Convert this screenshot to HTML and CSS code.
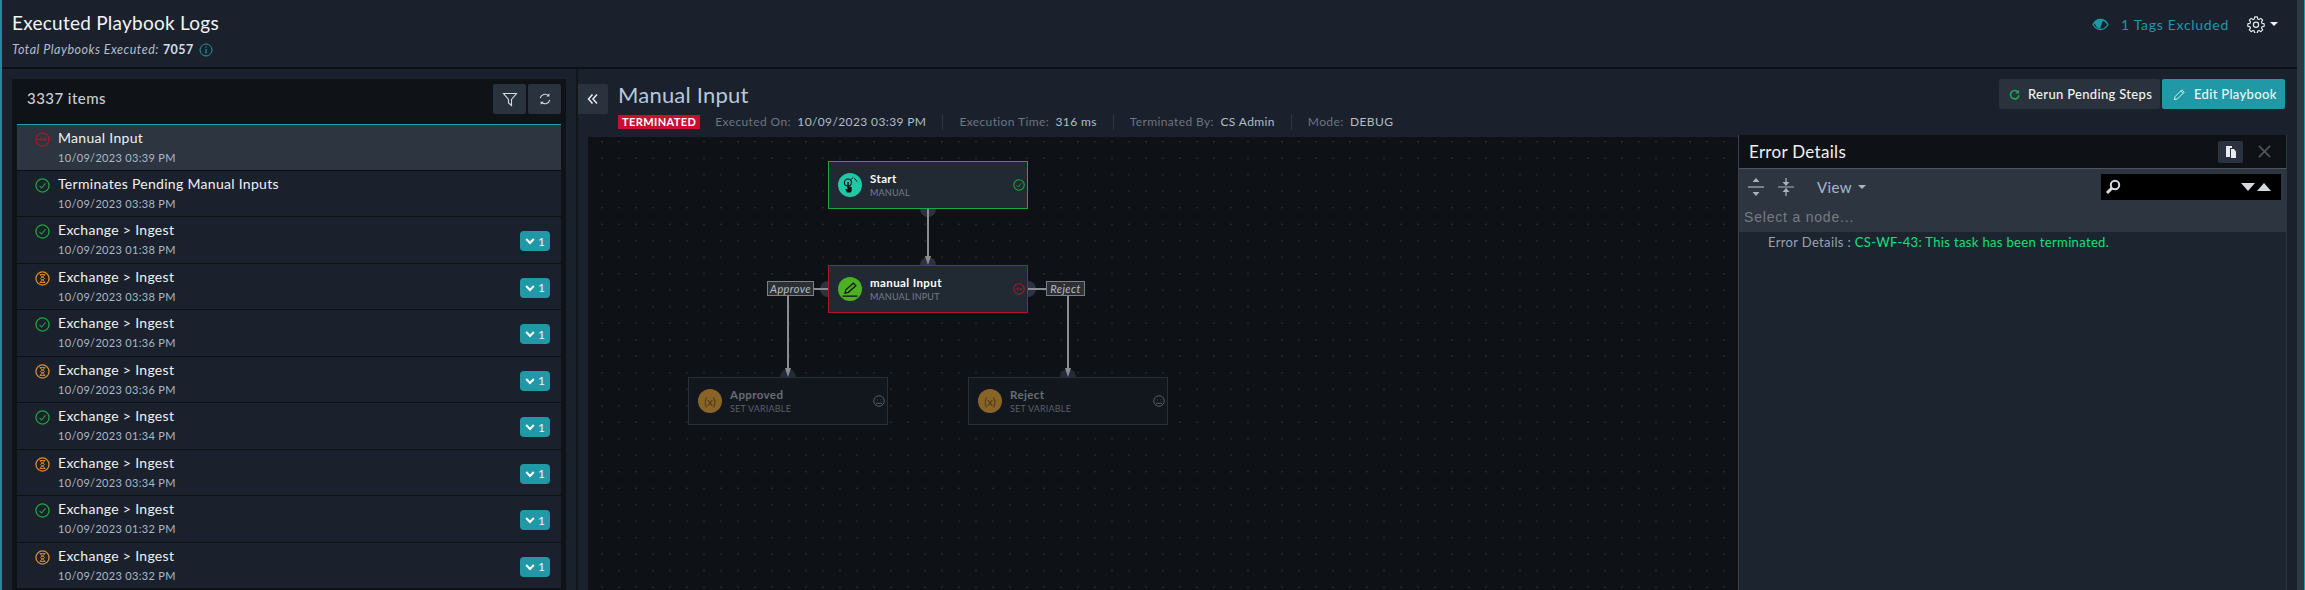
FILE: index.html
```html
<!DOCTYPE html>
<html lang="en">
  <head>
    <meta charset="UTF-8" />
    <title>Executed Playbook Logs</title>
    <link rel="stylesheet" href="styles.css">
  </head>
  <body>
    <svg class="defs" width="0" height="0">
      <symbol id="st-ok" viewBox="0 0 16 16">
        <circle cx="8" cy="8" r="7" fill="none" stroke="#1fa53c" stroke-width="1.4" />
        <path d="M4.8 8.400l2.200 2.300 4.200-5" fill="none" stroke="#1fa53c" stroke-width="1.100" />
      </symbol>
      <symbol id="st-term" viewBox="0 0 16 16">
        <circle cx="8" cy="8" r="7" fill="none" stroke="#b5122b" stroke-width="1.4" />
        <path d="M2.500 8h5M6 6.500L7.600 8 6 9.500M9 6.300l3 3.400M12 6.300l-3 3.400" fill="none" stroke="#b5122b" stroke-width="1.100" />
      </symbol>
      <symbol id="st-wait" viewBox="0 0 16 16">
        <circle cx="8" cy="8" r="7" fill="none" stroke="#de8b2c" stroke-width="1.4" />
        <path d="M5 3.800h6M5 12.200h6M5.800 3.800c0 2.600 4.400 3 4.400 4.200s-4.400 1.600-4.400 4.200M10.200 3.800c0 2.600-4.400 3-4.400 4.200s4.400 1.600 4.400 4.200" fill="none" stroke="#de8b2c" stroke-width="1" />
      </symbol>
      <symbol id="chev" viewBox="0 0 10 8">
        <path d="M1.200 2l3.800 4 3.800-4" fill="none" stroke="#fff" stroke-width="2" />
      </symbol>
    </svg>

    <div class="page">
      <header class="top-bar">
        <div>
          <h1 class="page-title">Executed Playbook Logs</h1>
          <div class="page-sub">
            <em>Total Playbooks Executed:</em> <strong>7057</strong>
            <svg class="info-icon" viewBox="0 0 14 14">
              <circle cx="7" cy="7" r="6" fill="none" stroke="#2198a5" />
              <path d="M7 6v4.500M7 3.400v1.300" stroke="#2198a5" stroke-width="1.2" />
            </svg>
          </div>
        </div>
        <div class="top-tools">
          <svg class="eye-icon" viewBox="0 0 17 13">
            <path d="M1 6.500C3 3 5.500 1.500 8.500 1.500s5.500 1.500 7.500 5c-2 3.500-4.500 5-7.500 5S3 10 1 6.500z" fill="none" stroke="#2198a5" stroke-width="1.3" />
            <path d="M2.500 4.500C4 3 6 2 8 2h3l-3 9C5.500 10.500 3.500 8 2.500 4.500z" fill="#2198a5" />
          </svg>
          <span class="tags-text">1 Tags Excluded</span>
          <svg class="gear-icon" viewBox="0 0 24 24">
            <path d="M10.300 2.500h3.400l.6 2.900 1.700.7 2.500-1.600 2.400 2.400-1.600 2.500.7 1.700 2.900.6v3.400l-2.900.6-.7 1.700 1.600 2.500-2.400 2.400-2.500-1.600-1.700.7-.6 2.900h-3.400l-.6-2.900-1.700-.7-2.500 1.600-2.400-2.400 1.600-2.500-.7-1.700-2.900-.6v-3.400l2.900-.6.7-1.700-1.600-2.500 2.400-2.400 2.500 1.600 1.700-.7z" fill="none" stroke="#e8ecf0" stroke-width="1.500" stroke-linejoin="round" />
            <circle cx="12" cy="13" r="3.500" fill="none" stroke="#e8ecf0" stroke-width="1.500" />
          </svg>
          <span class="caret"></span>
        </div>
      </header>

      <main class="main">
        <aside class="sidebar">
          <div class="list-panel">
            <div class="list-head">
              <span class="items-count">3337 items</span>
              <div class="list-tools">
                <button class="tool-btn">
                  <svg viewBox="0 0 16 16" width="16" height="16">
                    <path d="M1.500 2.500h13L9.500 8.500v6l-3-2.500V8.500z" fill="none" stroke="#d5dae0" stroke-width="1.100" />
                  </svg>
                </button>
                <button class="tool-btn">
                  <svg viewBox="0 0 16 16" width="14" height="14">
                    <path d="M2.500 7a5.500 5.500 0 0 1 9.500-2.500M13.500 9A5.500 5.500 0 0 1 4 11.500" fill="none" stroke="#d5dae0" stroke-width="1.200" />
                    <path d="M13 1.500v3.500H9.500zM3 14.500V11h3.500z" fill="#d5dae0" />
                  </svg>
                </button>
              </div>
            </div>
            <ul class="log-list">
              <li class="log-row selected">
                <svg class="status-icon"><use href="#st-term" /></svg>
                <div class="log-text"><div class="log-name">Manual Input</div><div class="log-date">10/09/2023 03:39 PM</div></div>
              </li>
              <li class="log-row">
                <svg class="status-icon"><use href="#st-ok" /></svg>
                <div class="log-text"><div class="log-name">Terminates Pending Manual Inputs</div><div class="log-date">10/09/2023 03:38 PM</div></div>
              </li>
              <li class="log-row">
                <svg class="status-icon"><use href="#st-ok" /></svg>
                <div class="log-text"><div class="log-name">Exchange &gt; Ingest</div><div class="log-date">10/09/2023 01:38 PM</div></div>
                <span class="count-badge"><svg class="chev"><use href="#chev" /></svg>1</span>
              </li>
              <li class="log-row">
                <svg class="status-icon"><use href="#st-wait" /></svg>
                <div class="log-text"><div class="log-name">Exchange &gt; Ingest</div><div class="log-date">10/09/2023 03:38 PM</div></div>
                <span class="count-badge"><svg class="chev"><use href="#chev" /></svg>1</span>
              </li>
              <li class="log-row">
                <svg class="status-icon"><use href="#st-ok" /></svg>
                <div class="log-text"><div class="log-name">Exchange &gt; Ingest</div><div class="log-date">10/09/2023 01:36 PM</div></div>
                <span class="count-badge"><svg class="chev"><use href="#chev" /></svg>1</span>
              </li>
              <li class="log-row">
                <svg class="status-icon"><use href="#st-wait" /></svg>
                <div class="log-text"><div class="log-name">Exchange &gt; Ingest</div><div class="log-date">10/09/2023 03:36 PM</div></div>
                <span class="count-badge"><svg class="chev"><use href="#chev" /></svg>1</span>
              </li>
              <li class="log-row">
                <svg class="status-icon"><use href="#st-ok" /></svg>
                <div class="log-text"><div class="log-name">Exchange &gt; Ingest</div><div class="log-date">10/09/2023 01:34 PM</div></div>
                <span class="count-badge"><svg class="chev"><use href="#chev" /></svg>1</span>
              </li>
              <li class="log-row">
                <svg class="status-icon"><use href="#st-wait" /></svg>
                <div class="log-text"><div class="log-name">Exchange &gt; Ingest</div><div class="log-date">10/09/2023 03:34 PM</div></div>
                <span class="count-badge"><svg class="chev"><use href="#chev" /></svg>1</span>
              </li>
              <li class="log-row">
                <svg class="status-icon"><use href="#st-ok" /></svg>
                <div class="log-text"><div class="log-name">Exchange &gt; Ingest</div><div class="log-date">10/09/2023 01:32 PM</div></div>
                <span class="count-badge"><svg class="chev"><use href="#chev" /></svg>1</span>
              </li>
              <li class="log-row">
                <svg class="status-icon"><use href="#st-wait" /></svg>
                <div class="log-text"><div class="log-name">Exchange &gt; Ingest</div><div class="log-date">10/09/2023 03:32 PM</div></div>
                <span class="count-badge"><svg class="chev"><use href="#chev" /></svg>1</span>
              </li>
            </ul>
          </div>
        </aside>

        <section class="detail">
          <div class="detail-head">
            <button class="collapse-btn">
              <svg viewBox="0 0 12 12" width="12" height="12">
                <path d="M5.500 1.500L1.500 6l4 4.500M10 1.500L6 6l4 4.500" fill="none" stroke="#e8ecf0" stroke-width="1.500" />
              </svg>
            </button>
            <div class="detail-info">
              <h2 class="detail-title">Manual Input</h2>
              <div class="meta">
                <span class="term-badge">TERMINATED</span>
                <span class="meta-item"><span class="meta-label">Executed On:</span> 10/09/2023 03:39 PM</span>
                <span class="meta-item"><span class="meta-label">Execution Time:</span> 316 ms</span>
                <span class="meta-item"><span class="meta-label">Terminated By:</span> CS Admin</span>
                <span class="meta-item last"><span class="meta-label">Mode:</span> DEBUG</span>
              </div>
            </div>
            <div class="actions">
              <button class="btn btn-dark">
                <svg viewBox="0 0 12 12" width="11" height="11">
                  <path d="M10 3.500A4.600 4.600 0 1 0 10.800 7" fill="none" stroke="#1fa55a" stroke-width="1.800" />
                  <path d="M11 .8v4H7z" fill="#1fa55a" />
                </svg>
                Rerun Pending Steps
              </button>
              <button class="btn btn-teal">
                <svg viewBox="0 0 14 14" width="13" height="13">
                  <path d="M1.500 12.500l.8-3.300 7.200-7.200 2.500 2.500-7.200 7.200zM8.300 3.200l2.500 2.500" fill="none" stroke="#e8f6f7" stroke-width="1" />
                </svg>
                Edit Playbook
              </button>
            </div>
          </div>

          <div class="detail-body">
            <div class="canvas">
              <svg class="edges" width="1150" height="453">
                <g fill="#2b3340">
                  <circle cx="340" cy="72" r="8" />
                  <circle cx="340" cy="128" r="8" />
                  <circle cx="240" cy="152" r="8" />
                  <circle cx="440" cy="152" r="8" />
                  <circle cx="200" cy="240" r="8" fill="#222b3a" />
                  <circle cx="480" cy="240" r="8" fill="#222b3a" />
                </g>
                <g stroke="#8b8d90" stroke-width="2" fill="none">
                  <path d="M340 72V122" />
                  <path d="M225 152H240M440 152H458" />
                  <path d="M200 159V234" />
                  <path d="M480 159V234" />
                </g>
                <g fill="#8b8d90">
                  <path d="M337 119h6l-3 9z" />
                  <path d="M197 231h6l-3 9z" />
                  <path d="M477 231h6l-3 9z" />
                </g>
              </svg>

              <div class="node node-ok node-start">
                <span class="node-icon icon-teal">
                  <svg viewBox="0 0 24 24" width="20" height="20">
                    <circle cx="9.500" cy="9" r="4.200" fill="none" stroke="#111" stroke-width="1.300" />
                    <path d="M13 5.500l3-2.500M17.500 4l3 4" fill="none" stroke="#111" stroke-width="1.200" />
                    <path d="M8.800 8.500h1.700v5l3.500 1v4.500l-1 2H8.500L6 16.500l2.800 1z" fill="#111" />
                  </svg>
                </span>
                <div class="node-text"><div class="node-name">Start</div><div class="node-type">MANUAL</div></div>
                <svg class="node-status"><use href="#st-ok" /></svg>
              </div>

              <div class="node node-fail node-input">
                <span class="node-icon icon-green">
                  <svg viewBox="0 0 24 24" width="20" height="20">
                    <path d="M6 17l1-4 9-8 3 3-9 8zM3 20.500h18" fill="none" stroke="#111" stroke-width="1.500" />
                  </svg>
                </span>
                <div class="node-text"><div class="node-name">manual Input</div><div class="node-type">MANUAL INPUT</div></div>
                <svg class="node-status"><use href="#st-term" /></svg>
              </div>

              <div class="node node-faded node-approved">
                <span class="node-icon icon-brown">(x)</span>
                <div class="node-text"><div class="node-name">Approved</div><div class="node-type">SET VARIABLE</div></div>
                <svg class="node-status" viewBox="0 0 16 16">
                  <circle cx="8" cy="8" r="7" fill="none" stroke="#5e6368" stroke-width="1.200" />
                  <path d="M5 6.500h1M10 6.500h1M4 11h8" stroke="#5e6368" stroke-width="1.200" />
                </svg>
              </div>

              <div class="node node-faded node-reject">
                <span class="node-icon icon-brown">(x)</span>
                <div class="node-text"><div class="node-name">Reject</div><div class="node-type">SET VARIABLE</div></div>
                <svg class="node-status" viewBox="0 0 16 16">
                  <circle cx="8" cy="8" r="7" fill="none" stroke="#5e6368" stroke-width="1.200" />
                  <path d="M5 6.500h1M10 6.500h1M4 11h8" stroke="#5e6368" stroke-width="1.200" />
                </svg>
              </div>

              <span class="edge-label label-approve">Approve</span>
              <span class="edge-label label-reject">Reject</span>
            </div>

            <div class="error-panel">
              <div class="error-head">
                <span class="error-title">Error Details</span>
                <button class="copy-btn">
                  <svg viewBox="0 0 14 14" width="14" height="14">
                    <path d="M2 1h6v2H6v9H2z" fill="#e8ecf0" />
                    <path d="M7 4h3l2 2.500V13H7z" fill="#e8ecf0" />
                  </svg>
                </button>
                <svg class="close-icon" viewBox="0 0 14 14">
                  <path d="M1 1l12 12M13 1L1 13" stroke="#50555c" stroke-width="1.800" />
                </svg>
              </div>
              <div class="error-toolbar">
                <svg class="tree-icon" viewBox="0 0 16 20">
                  <path d="M8 1l3.500 4h-7zM8 19l-3.500-4h7z" fill="#aab2bc" />
                  <path d="M0 10h16" stroke="#aab2bc" stroke-width="1.200" />
                </svg>
                <svg class="tree-icon" viewBox="0 0 16 20">
                  <path d="M8 9L4.500 5h7zM8 11l3.500 4h-7z" fill="#aab2bc" />
                  <path d="M8 1v4M8 15v4M0 10h16" stroke="#aab2bc" stroke-width="1.200" />
                </svg>
                <span class="view-menu">View <span class="view-caret"></span></span>
                <div class="search-box">
                  <svg viewBox="0 0 16 16" width="16" height="16">
                    <circle cx="10" cy="6" r="4.200" fill="none" stroke="#d8dce0" stroke-width="2" />
                    <path d="M7 9l-5 5" stroke="#d8dce0" stroke-width="3" />
                  </svg>
                  <span class="search-arrows"><span class="tri-down"></span><span class="tri-up"></span></span>
                </div>
              </div>
              <div class="node-path">Select a node...</div>
              <div class="error-body">Error Details : <span class="error-msg">CS-WF-43: This task has been terminated.</span></div>
            </div>
          </div>
        </section>
      </main>
    </div>
    <div class="edge-strip"></div>
  </body>
</html>
```

FILE: styles.css
```css
* {
  box-sizing: border-box;
}

html {
  height: 590px;
  overflow: hidden;
}

body {
  margin: 0;
  height: 590px;
  overflow: hidden;
  font-family: Lato, "Open Sans", sans-serif;
  background-color: #1a212c;
  color: #e8ecf0;
  border-left: 2px solid #1f8d99;
  display: flex;
}

.defs {
  position: absolute;
}

button {
  font-family: inherit;
  border: none;
  cursor: pointer;
  padding: 0;
}

.page {
  flex: 1;
  min-width: 0;
  display: flex;
  flex-direction: column;
}

.edge-strip {
  width: 8px;
  flex: none;
  background-color: #2c3842;
  border-right: 1px solid #1f9da9;
}

.top-bar {
  height: 69px;
  flex: none;
  display: flex;
  justify-content: space-between;
  border-bottom: 2px solid #0c1014;
  padding: 11px 19px 0 10px;
}

.page-title {
  margin: 0;
  font-size: 19px;
  line-height: 24px;
  font-weight: 400;
  color: #f2f4f6;
  letter-spacing: 0.25px;
}

.page-sub {
  margin-top: 7px;
  display: flex;
  align-items: center;
  font-size: 12.500px;
  line-height: 16px;
  letter-spacing: 0.5px;
  color: #b4bec9;
}

.page-sub strong {
  margin-left: 4px;
  color: #d5dbe2;
}

.info-icon {
  width: 14px;
  height: 14px;
  margin-left: 5px;
}

.top-tools {
  display: flex;
  align-items: center;
  height: 26px;
  color: #2198a5;
}

.eye-icon {
  width: 17px;
  height: 13px;
  margin-right: 12px;
}

.tags-text {
  font-size: 14px;
  letter-spacing: 0.7px;
  margin-right: 18px;
}

.gear-icon {
  width: 18px;
  height: 18px;
  margin-right: 5px;
}

.caret {
  border-left: 4px solid transparent;
  border-right: 4px solid transparent;
  border-top: 4px solid #f0f2f4;
}

.main {
  flex: 1;
  display: flex;
  min-height: 0;
}

.sidebar {
  width: 576px;
  flex: none;
  padding: 10px 10px 0;
  border-right: 2px solid #11161c;
}

.list-panel {
  height: 100%;
  background-color: #0f1318;
  padding: 0 5px;
  overflow: hidden;
}

.list-head {
  height: 45px;
  display: flex;
  justify-content: space-between;
  padding: 5px 0 0 10px;
}

.items-count {
  font-size: 15px;
  line-height: 28px;
  font-weight: 500;
  letter-spacing: 0.45px;
  color: #c7ced6;
}

.list-tools {
  display: flex;
  gap: 2px;
}

.tool-btn {
  width: 33px;
  height: 30px;
  background-color: #2a323d;
  border-radius: 2px;
  display: flex;
  align-items: center;
  justify-content: center;
}

.log-list {
  list-style: none;
  margin: 0;
  padding: 0;
  border-top: 1px solid #1f9da9;
}

.log-row {
  height: 46.5px;
  display: flex;
  background-color: #1a212c;
  border-bottom: 1px solid #0c1014;
  padding: 3px 11px 0 18px;
}

.log-row.selected {
  background-color: #2d3540;
  height: 45.500px;
}

.status-icon {
  width: 15px;
  height: 15px;
  margin: 4px 8px 0 0;
  flex: none;
}

.log-text {
  flex: 1;
}

.log-name {
  font-size: 14px;
  line-height: 20px;
  letter-spacing: 0.3px;
  color: #eef1f4;
}

.log-date {
  font-size: 11px;
  line-height: 20px;
  letter-spacing: 0.32px;
  color: #aab8c8;
}

.count-badge {
  width: 30px;
  height: 20px;
  margin-top: 11px;
  border-radius: 4px;
  background-color: #2198a5;
  display: flex;
  align-items: center;
  justify-content: center;
  gap: 3px;
  font-size: 12px;
  color: #eaf6f7;
}

.chev {
  width: 10px;
  height: 8px;
}

.detail {
  flex: 1;
  min-width: 0;
  display: flex;
  flex-direction: column;
}

.detail-head {
  height: 66px;
  flex: none;
  display: flex;
  padding: 15px 12px 0 0;
}

.collapse-btn {
  width: 30px;
  height: 30px;
  background-color: #2a323d;
  border-radius: 0 2px 2px 0;
  flex: none;
  display: flex;
  align-items: center;
  justify-content: center;
}

.detail-info {
  flex: 1;
  margin-left: 10px;
}

.detail-title {
  margin: 0;
  font-size: 22px;
  line-height: 22px;
  font-weight: 400;
  color: #b6c7dc;
  letter-spacing: 0.2px;
}

.meta {
  display: flex;
  align-items: center;
  margin-top: 8px;
  font-size: 12px;
  line-height: 16px;
  letter-spacing: 0.38px;
  color: #b5bcc6;
}

.term-badge {
  background-color: #c8102e;
  color: #fff;
  font-size: 11px;
  font-weight: 700;
  line-height: 14px;
  padding: 0 4px;
  letter-spacing: 0.4px;
  margin-right: 15px;
}

.meta-item {
  padding-right: 16px;
  margin-right: 16px;
  border-right: 1px solid #2d3540;
}

.meta-item.last {
  border-right: none;
}

.meta-label {
  color: #6d7480;
  margin-right: 3px;
}

.actions {
  display: flex;
  gap: 2px;
  margin-top: -5px;
}

.btn {
  height: 30px;
  font-size: 13px;
  letter-spacing: 0.32px;
  border-radius: 2px;
  color: #f2f4f6;
  font-weight: 500;
  display: flex;
  align-items: center;
  gap: 8px;
}

.btn-dark {
  width: 161px;
  background-color: #2a323d;
  padding-left: 10px;
}

.btn-teal {
  width: 123px;
  background-color: #2198a5;
  padding-left: 11px;
}

.detail-body {
  flex: 1;
  min-height: 0;
  display: flex;
  margin: 0 10px;
}

.canvas {
  flex: 1;
  position: relative;
  margin-top: 2px;
  background-color: #0e1217;
  background-image: radial-gradient(circle, #454b53 0.7px, transparent 1px);
  background-size: 17px 16.5px;
  background-position: 5.5px -3.5px;
}

.edges {
  position: absolute;
  left: 0;
  top: 0;
}

.node {
  position: absolute;
  width: 200px;
  height: 48px;
  display: flex;
  align-items: center;
  padding-left: 9px;
  background-color: #212933;
  border: 1px solid;
}

.node-ok {
  border-color: #1fa53c;
}

.node-fail {
  border-color: #b5122b;
}

.node-faded {
  background-color: #12171d;
  border-color: #2a2f36;
}

.node-start {
  left: 240px;
  top: 24px;
}

.node-input {
  left: 240px;
  top: 128px;
}

.node-approved {
  left: 100px;
  top: 240px;
}

.node-reject {
  left: 380px;
  top: 240px;
}

.node-icon {
  width: 24px;
  height: 24px;
  border-radius: 50%;
  flex: none;
  display: flex;
  align-items: center;
  justify-content: center;
}

.icon-teal {
  background-color: #1fc9a8;
}

.icon-green {
  background-color: #4caf26;
}

.icon-brown {
  background-color: #8a6327;
  color: #3f3320;
  font-size: 11px;
}

.node-text {
  flex: 1;
  margin-left: 8px;
}

.node-name {
  font-size: 11.500px;
  line-height: 14px;
  font-weight: 700;
  letter-spacing: 0.4px;
  color: #fff;
}

.node-type {
  font-size: 9px;
  line-height: 13px;
  letter-spacing: 0.2px;
  color: #777d85;
}

.node-faded .node-name {
  color: #686d73;
}

.node-faded .node-type {
  color: #5a5f65;
}

.node-status {
  width: 12px;
  height: 12px;
  margin-right: 2px;
  flex: none;
}

.edge-label {
  position: absolute;
  top: 144px;
  height: 15px;
  background-color: #2c2f34;
  border: 1px solid #7d7f82;
  font-size: 11px;
  line-height: 13px;
  font-style: italic;
  letter-spacing: 0.4px;
  text-align: center;
  color: #b8bcc0;
}

.label-approve {
  left: 179px;
  width: 47px;
}

.label-reject {
  left: 458px;
  width: 39px;
}

.error-panel {
  width: 549px;
  flex: none;
  display: flex;
  flex-direction: column;
  background-color: #1c2430;
  border-left: 1px solid #3a424d;
  border-right: 1px solid #2d3540;
}

.error-head {
  height: 34px;
  flex: none;
  display: flex;
  align-items: center;
  background-color: #0e1217;
  border-bottom: 1px solid #4d545d;
  padding: 0 15px 0 10px;
}

.error-title {
  flex: 1;
  font-size: 17px;
  letter-spacing: 0.3px;
  color: #eef1f4;
}

.copy-btn {
  width: 25px;
  height: 22px;
  background-color: #2a323d;
  border-radius: 2px;
  display: flex;
  align-items: center;
  justify-content: center;
  margin-right: 15px;
}

.close-icon {
  width: 13px;
  height: 13px;
}

.error-toolbar {
  height: 36px;
  flex: none;
  display: flex;
  align-items: center;
  background-color: #2d3540;
  padding: 0 5px 0 9px;
}

.tree-icon {
  width: 16px;
  height: 20px;
  margin-right: 14px;
}

.view-menu {
  margin-left: 9px;
  font-size: 15px;
  letter-spacing: 0.4px;
  color: #a7b7ca;
  display: flex;
  align-items: center;
  gap: 6px;
}

.view-caret {
  border-left: 4px solid transparent;
  border-right: 4px solid transparent;
  border-top: 4px solid #a7b7ca;
}

.search-box {
  margin-left: auto;
  width: 180px;
  height: 26px;
  background-color: #000;
  display: flex;
  align-items: center;
  justify-content: space-between;
  padding: 0 10px 0 4px;
}

.search-arrows {
  display: flex;
  gap: 2px;
}

.tri-down {
  border-left: 7px solid transparent;
  border-right: 7px solid transparent;
  border-top: 8px solid #d5d9dd;
}

.tri-up {
  border-left: 7px solid transparent;
  border-right: 7px solid transparent;
  border-bottom: 8px solid #d5d9dd;
}

.node-path {
  height: 27px;
  flex: none;
  background-color: #2d3540;
  padding-left: 5px;
  font-family: "Liberation Sans", Arial, sans-serif;
  font-size: 14px;
  line-height: 24px;
  letter-spacing: 0.8px;
  color: #767c84;
}

.error-body {
  flex: 1;
  padding: 1px 0 0 29px;
  font-size: 13px;
  line-height: 18px;
  letter-spacing: 0.35px;
  color: #9aa3ad;
}

.error-msg {
  color: #14e07a;
}
```
